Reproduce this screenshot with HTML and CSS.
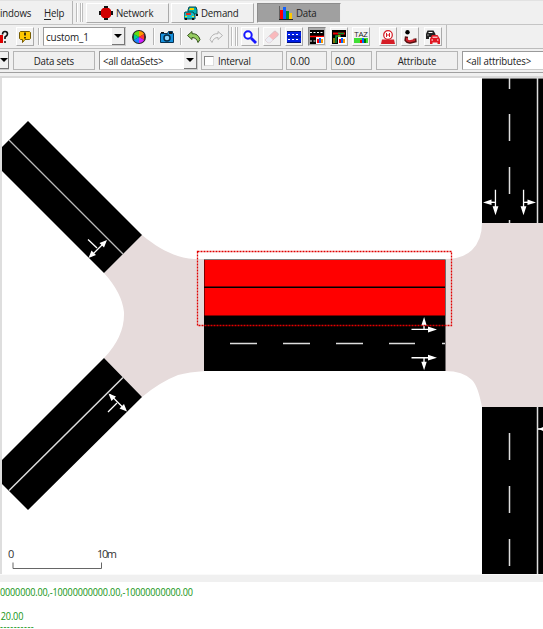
FILE: index.html
```
<!DOCTYPE html>
<html lang="en">
<head>
<meta charset="utf-8">
<title>Network editor</title>
<link rel="stylesheet" href="styles.css">
</head>
<body>
<div class="window">
  <header class="menubar">
    <nav class="menus"><span class="menu">indows</span><span class="menu"><u>H</u>elp</span></nav>
    <i class="grip"></i>
    <button class="mode network"><svg width="14" height="14" viewBox="0 0 14 14"><path d="M5 0h4v14H5zM0 5h14v4H0z" fill="#111"/><path d="M4 2h6l2 2v6l-2 2H4l-2-2V4z" fill="#d00000"/></svg><span>Network</span></button>
    <button class="mode demand"><svg width="14" height="14" viewBox="0 0 14 14"><path d="M5 1h7l1 3v4H4V4z" fill="#00aeb4" stroke="#064c55"/><path d="M6 2h4v2H5z" fill="#f2d500"/><path d="M1 6h8l2 3v4H0V8z" fill="#17bfc9" stroke="#064c55"/><path d="M2 7h5v2H2z" fill="#e03020"/><path d="M1 12h2v2H1zM8 12h2v2H8zM12 8h2v2h-2z" fill="#111"/><path d="M1 10h2v1H1zM8 10h2v1H8z" fill="#ffe600"/></svg><span>Demand</span></button>
    <button class="mode data"><svg width="14" height="14" viewBox="0 0 14 14"><path d="M0 0v13.500h14" fill="none" stroke="#222"/><path d="M1 4h3v9H1z" fill="#f00"/><path d="M4 1h3v12H4z" fill="#1060ff"/><path d="M7 5h3v8H7z" fill="#008c28"/><path d="M10 7h3v6h-3z" fill="#ffc800"/></svg><span>Data</span></button>
  </header>

  <div class="toolbar">
    <div class="group view-group">
      <svg class="help-icon" width="9" height="14" viewBox="0 0 9 14"><path d="M0 5h3v8H0z" fill="#e00000"/><path d="M2.500 4.500Q2.500 1.500 5 1.500T7.500 4Q7.500 5.500 5 7v2M4 12h2" fill="none" stroke="#111" stroke-width="1.600"/></svg>
      <button class="tool"><svg width="14" height="14" viewBox="0 0 14 14"><path d="M2.500 1.500h9l1 1v6l-1 1H7l-2.500 3V9.500h-2l-1-1v-6z" fill="#ffc800" stroke="#765b00"/><path d="M7 2.500v3M7 7v1.500" stroke="#111" stroke-width="1.600"/></svg></button>
      <i class="rule"></i>
      <div class="combo scheme"><span>custom_1</span><b class="arrow"></b></div>
      <svg class="wheel" width="14" height="14" viewBox="-7 -7 14 14"><circle r="7" fill="#222"/><path d="M0 0V-6A6 6 0 0 1 5.200-3z" fill="#ff9500"/><path d="M0 0L5.200-3V3z" fill="#f33"/><path d="M0 0L5.200 3A6 6 0 0 1 0 6z" fill="#d020ff"/><path d="M0 0V6A6 6 0 0 1-5.200 3z" fill="#2080ff"/><path d="M0 0L-5.200 3V-3z" fill="#00d090"/><path d="M0 0L-5.200-3A6 6 0 0 1 0-6z" fill="#60dd10"/></svg>
      <i class="rule"></i>
      <svg class="camera" width="14" height="12" viewBox="0 0 14 12"><path d="M.5 2.500h7l1-2h4v2h1v9H.5z" fill="#1590dd" stroke="#073150"/><path d="M1 1h3v1H1zM9 1h3v2H9z" fill="#111"/><circle cx="7" cy="7" r="3" fill="#8dd7ff" stroke="#052b45" stroke-width="1.500"/></svg>
      <i class="rule"></i>
      <svg class="undo" width="14" height="12" viewBox="0 0 14 12"><path d="M.5 4.500L5 .5v2.200q6-.5 8 5.800l-2 3Q9.500 6.500 5 6.500v2z" fill="#95cc60" stroke="#36531e"/></svg>
      <svg class="redo" width="14" height="12" viewBox="0 0 14 12"><path d="M13.500 4.500L9 .5v2.200q-6-.5-8 5.800l2 3Q4.500 6.500 9 6.500v2z" fill="#f2f2f2" stroke="#b4b4b4"/></svg>
    </div>
    <i class="grip"></i>
    <div class="group modes-group">
      <button class="tool"><svg width="14" height="14" viewBox="0 0 14 14"><circle cx="5" cy="5" r="3.700" fill="#fff" stroke="#1616ff" stroke-width="2"/><path d="M8 8l5 5" stroke="#1616ff" stroke-width="2.800"/></svg></button>
      <button class="tool"><svg width="14" height="14" viewBox="0 0 14 14"><path d="M1 9L9 1.500q1-1 2 0l2 2q.8 1 0 2L5 12.500q-1 .7-2 0L1 11q-.8-1 0-2z" fill="#f9b9bc" stroke="#c8b9c0" stroke-width=".7"/><path d="M1 9l3-2.700L8 10l-3 2.500q-1 .7-2 0L1 11q-.8-1 0-2z" fill="#eceef5"/></svg></button>
      <button class="tool"><svg width="14" height="14" viewBox="0 0 14 14"><path d="M0 1h14v12H0z" fill="#001ee5"/><path d="M0 1.500h14M0 12.500h14M0 7h14" stroke="#001078"/><path d="M1 4.500h12M1 9.500h12" stroke="#fff" stroke-dasharray="2 2"/></svg></button>
      <button class="tool pressed"><svg width="14" height="14" viewBox="0 0 14 14"><path d="M0 0h14v14H0z"/><path d="M0 2.500h14M0 11h7" stroke="#fff" stroke-dasharray="2 1.500"/><path d="M0 6.500h14" stroke="#f00" stroke-width="1.500"/><path d="M6 7h8v7H6z" fill="#fff"/><path d="M7 9h2v4H7z" fill="#f00"/><path d="M9 8h2v5H9z" fill="#06f"/><path d="M11 9h2v4h-2z" fill="#f90"/></svg></button>
      <button class="tool"><svg width="14" height="14" viewBox="0 0 14 14"><path d="M0 0h14v14H0z"/><path d="M1 3.500h12" stroke="#e00" stroke-width="2"/><path d="M6 3.500h6M9 6H4v7" fill="none" stroke="#0b9b38" stroke-width="1.500"/><path d="M2 8v5M7 5v3" stroke="#ffe000"/><path d="M6 7h8v7H6z" fill="#fff"/><path d="M7 9h2v4H7z" fill="#f00"/><path d="M9 8h2v5H9z" fill="#06f"/><path d="M11 9h2v4h-2z" fill="#f90"/></svg></button>
      <button class="tool taz"><span>TAZ</span><svg width="14" height="5" viewBox="0 0 14 5"><path d="M0 0h14v5H0z" fill="#3fdf35"/><path d="M6 2h2v3H6z" fill="#f00"/><path d="M8 0h2v5H8z" fill="#06f"/><path d="M10 1h2v4h-2z" fill="#070"/></svg></button>
      <button class="tool spaced"><svg width="14" height="14" viewBox="0 0 14 14"><path d="M1 9.500h12l1 4.500H0z" fill="#d51c26"/><circle cx="7" cy="5" r="4.300" fill="#fff" stroke="#d51c26" stroke-width="1.200"/><path d="M5.500 3v4M8.500 3v4M5.500 5h3" stroke="#d51c26"/></svg></button>
      <button class="tool"><svg width="14" height="14" viewBox="0 0 14 14"><circle cx="4.500" cy="2.200" r="2.200"/><path d="M3.500 6.500L3 10q2 3 5 2l4-1-.2-2.500" fill="none" stroke="#511" stroke-width="3.200"/><path d="M4 8v2q2 2 4 1l4-1" fill="none" stroke="#d0202b" stroke-width="2"/></svg></button>
      <button class="tool"><svg width="14" height="14" viewBox="0 0 14 14"><path d="M0 4L1.500.5h6L9.500 4v5H7V7H3v2H0z" fill="#222"/><path d="M2.500 2.500h4M1.500 5h1" stroke="#fff"/><path d="M4 9l2-4h5.500L14 9v5h-2.500v-1.500h-5V14H4z" fill="#e01822"/><path d="M6.500 7.200h5M5.500 10h1.500M11 10h1.500" stroke="#fff"/></svg></button>
    </div>
  </div>

  <div class="filters">
    <div class="combo clipped"><b class="arrow"></b></div>
    <div class="label data-sets"><span>Data sets</span></div>
    <div class="combo all-sets"><span>&lt;all dataSets&gt;</span><b class="arrow"></b></div>
    <label class="label interval"><i class="box"></i><span>Interval</span></label>
    <div class="label number begin"><span>0.00</span></div>
    <div class="label number end"><span>0.00</span></div>
    <div class="label attribute"><span>Attribute</span></div>
    <div class="combo all-attributes"><span>&lt;all attributes&gt;</span></div>
  </div>
  <div class="edge"></div>

  <main class="canvas">
    <svg class="scene" width="541" height="496" viewBox="2 78 541 496">
      <defs>
        <g id="turn" fill="#fff" stroke="none">
          <path d="M-12.500-.6H5V.7h-17.500zM4-2.900L13 0 4 2.900z"/>
          <path d="M-.6 0H.7v4h2L.1 12.500-2.700 4h2z"/>
        </g>
      </defs>
      <path fill="#e6dbdb" d="M142 235C160 250 177 258 194 259H205V371Q189 372 178 375Q160 382 142 397L104 358Q125 336 124 312Q122 293 104 273zM445 259Q463 259 472 250Q482 240 482 223H543V407H482Q478 386 472 380Q463 371 445 371z"/>
      <g stroke="#ddd" stroke-width="1.500">
        <path stroke="none" d="M28 121L142 235 104 273-10 159zM104 358L142 397 28 510-10 472z"/>
        <path d="M9 140L123 254" stroke="#bbb" stroke-width="1.200"/><path d="M9 490.500L123 377.500"/>
        <path stroke="none" d="M482 78.500h61V223h-61zM482 407h61v167h-61z"/>
        <path d="M509.500 78v11M509.500 114v27M509.500 167v27M509.500 220v3M509.500 433v27M509.500 486v27M509.500 539v27M537.500 78v145M537.500 407v167"/>
      </g>
      <path d="M204 259.500h241.500V371H204z"/>
      <path fill="#f00" d="M204.500 260H445v55.500H204.500z"/>
      <path stroke="#000" stroke-width="1.400" d="M204 287.300h241"/>
      <path stroke="#ddd" stroke-width="1.500" d="M230 343.500h27M283 343.500h27M336 343.500h27M389 343.500h26M442 343.500h3"/>
      <use href="#turn" transform="translate(424 357.700)"/>
      <use href="#turn" transform="matrix(1 0 0 -1 424 329.500)"/>
      <use href="#turn" transform="matrix(0 1 1 0 523.500 202.300)"/>
      <use href="#turn" transform="matrix(0 1 -1 0 495.500 202.300)"/>
      <g fill="none" stroke="#fff" stroke-width="1.300"><path d="M91 256l14-14M88 239.500l9 8.500" /><path d="M110 394.500l15 15M108 412l9-9M538 429h5"/></g>
      <path fill="#fff" d="M88.500 258l3-7.500 4.500 4.500zM107 240l-7.500 3 4.500 4.500zM108.500 393.500l7.500 3-4.500 4.500zM127 411.500l-3-7.500-4.500 4.500zM539 429l4-2v4z"/>
      <path class="selection" d="M197.500 251.500H451.500V325.500H197.500z"/>
      <path fill="none" stroke="#666" d="M13 562.500v6h88.500v-6"/>
      <g class="scale"><text x="8" y="557.500">0</text><text x="97" y="557.500" textLength="20">10m</text></g>
    </svg>
  </main>
  <div class="splitter"></div>
  <section class="log">
    <p>0000000.00,-10000000000.00,-10000000000.00</p>
    <p class="second">20.00</p>
    <p class="dashes">----------</p>
  </section>
</div>
</body>
</html>
```
FILE: styles.css
```
* { box-sizing: border-box; }
body { margin: 0; overflow: hidden; background: #f0f0f0; color: #222; font: 11px/16px "Open Sans", "Noto Sans", sans-serif; letter-spacing: -0.2px; }
button { font: inherit; letter-spacing: inherit; color: inherit; padding: 0; margin: 0; }
svg { display: block; flex: none; }
span { display: inline-block; transform: scaleX(0.88); transform-origin: left; white-space: nowrap; }
.window { width: 543px; height: 629px; display: flex; flex-direction: column; overflow: hidden; }
.menubar { height: 25px; display: flex; border-top: 1px solid #e2e2e2; border-bottom: 1px solid #c5c5c5; flex: none; }
.menus { width: 73px; display: flex; padding-top: 4px; border-right: 1px solid #b5b5b5; flex: none; }
.menu { width: 44px; flex: none; }
.menu + .menu { width: 28px; }
.menu u { text-underline-offset: 2px; }
.grip { width: 7px; height: 19px; margin: 2px 3px 0 3px; border: solid #bdbdbd; border-width: 0 1px; background: linear-gradient(90deg, #fff 1px, #f0f0f0 1px 3px, #bbb 3px 4px, #fff 4px 5px, #f0f0f0 5px); flex: none; }
.mode { height: 20px; margin-top: 2px; display: flex; align-items: center; border: 1px solid #fff; border-right-color: #aaa; border-bottom-color: #aaa; background: #f0f0f0; flex: none; }
.network { width: 83px; padding-left: 12px; gap: 3px; }
.demand { width: 83px; padding-left: 12px; gap: 3px; margin-left: 2px; }
.data { width: 84px; padding-left: 21px; gap: 3px; margin-left: 3px; background: #a0a0a0; border-color: #8c8c8c #eee #eee #8c8c8c; }
.toolbar { height: 24px; display: flex; border-bottom: 1px solid #bcbcbc; flex: none; }
.group { display: flex; align-items: center; height: 23px; flex: none; border-right: 1px solid #bcbcbc; }
.view-group { width: 229px; }
.help-icon { margin-right: 7px; }
.tool { width: 18px; height: 19px; display: flex; align-items: center; justify-content: center; background: #f2f2f2; border: 1px solid #fff; border-right-color: #aaa; border-bottom-color: #aaa; flex: none; }
.pressed { background: #aaa; border-color: #888 #ddd #ddd #888; }
.rule { width: 2px; height: 17px; border-left: 1px solid #b5b5b5; border-right: 1px solid #fff; flex: none; }
.view-group .tool + .rule { margin: 0 3px 0 4px; }
.toolbar .grip { margin-left: 2px; margin-right: 3px; }
.combo { display: flex; align-items: center; background: #fff; border: 1px solid #9a9a9a; border-right-color: #ccc; border-bottom-color: #ccc; height: 19px; flex: none; }
.arrow { width: 13px; height: 17px; display: flex; align-items: center; justify-content: center; margin-left: auto; background: #f0f0f0; border-right: 1px solid #777; border-bottom: 1px solid #777; flex: none; }
.arrow::after { content: ""; border: 4px solid transparent; border-top-color: #000; border-bottom: 0; }
.scheme { width: 83px; padding-left: 2px; }
.scheme span { transform: scaleX(0.9); }
.wheel { margin: 0 7px 0 6px; }
.camera { margin: 0 6px 0 5px; }
.undo { margin: 0 8px 0 5px; }
.modes-group { width: 206px; gap: 4.200px; }
.spaced { margin-left: 5px; }
.taz { flex-direction: column; font: 8px/8px "Open Sans", sans-serif; }
.taz span { transform: none; }
.filters { height: 23px; display: flex; align-items: center; flex: none; }
.clipped { width: 9px; border-left: 0; }
.clipped .arrow { width: 9px; }
.label { height: 19px; display: flex; align-items: center; justify-content: center; border: 1px solid #b5b5b5; background: #f0f0f0; flex: none; }
.data-sets { width: 82px; margin-left: 4px; }
.data-sets span, .attribute span { transform-origin: center; }
.all-sets { width: 99px; margin-left: 4px; padding-left: 3px; }
.interval { width: 82px; margin-left: 3px; padding-left: 2px; justify-content: flex-start; gap: 4px; }
.box { width: 10px; height: 10px; background: #fff; border: 1px solid #888; border-right-color: #ddd; border-bottom-color: #ddd; }
.number { justify-content: flex-start; padding-left: 3px; }
.number span { transform: scaleX(0.94); }
.begin { width: 41px; margin-left: 3px; }
.end { width: 41px; margin-left: 4px; }
.attribute { width: 82px; margin-left: 4px; }
.all-attributes { width: 90px; margin-left: 4px; padding-left: 3px; }
.edge { height: 6px; border-top: 1px solid #a0a0a0; border-bottom: 2px solid #d9d9d9; flex: none; }
.canvas { height: 496px; border-left: 2px solid #dedede; background: #fff; flex: none; }
.selection { fill: none; stroke: #e00000; stroke-width: 1.300; stroke-dasharray: 2 1; }
.scale { font: 11px "Open Sans", sans-serif; fill: #333; letter-spacing: 0; }
.splitter { height: 8px; background: #f0f0f0; border-top: 1px solid #fafafa; flex: none; }
.log { flex: 1; background: #fff; color: #159515; padding-top: 2px; overflow: hidden; }
.log p { margin: 0; height: 16px; line-height: 16px; white-space: nowrap; letter-spacing: -0.2px; transform: scaleX(0.827); transform-origin: left; }
.log .second { margin-top: 9px; height: 14px; line-height: 14px; padding-left: 1px; }
.log .dashes { height: 7px; line-height: 6px; letter-spacing: 0.6px; }
```
